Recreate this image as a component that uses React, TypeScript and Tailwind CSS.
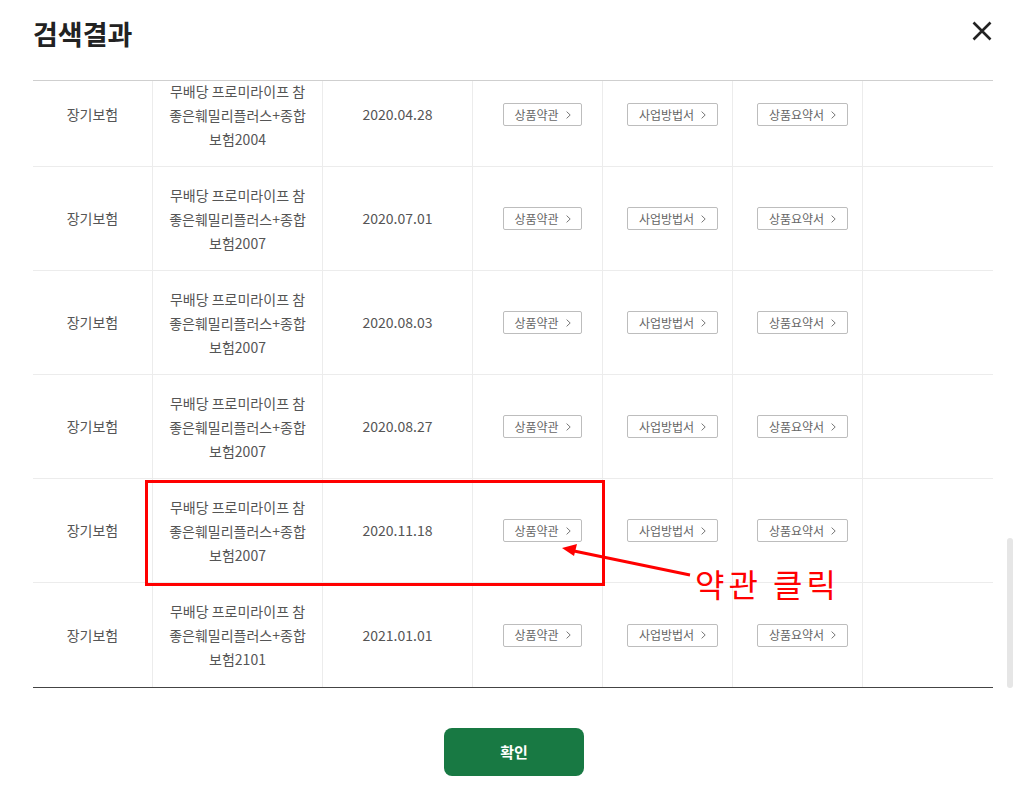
const rows = [
  { name: "보험2004", date: "2020.04.28" },
  { name: "보험2007", date: "2020.07.01" },
  { name: "보험2007", date: "2020.08.03" },
  { name: "보험2007", date: "2020.08.27" },
  { name: "보험2007", date: "2020.11.18" },
  { name: "보험2101", date: "2021.01.01" },
];

function DocButton({ label, w }: { label: string; w: string }) {
  return (
    <button
      className={`flex h-[23px] ${w} items-center justify-center gap-[7px] rounded-[2px] border border-[#bdbdbd] bg-white text-[12px] text-[#666]`}
    >
      <span>{label}</span>
      <svg width="5" height="8" viewBox="0 0 5 8" fill="none">
        <path d="M0.6 0.6 L4.2 4 L0.6 7.4" stroke="#777" strokeWidth="1" />
      </svg>
    </button>
  );
}

function Row({ name, date, last }: { name: string; date: string; last: boolean }) {
  return (
    <div
      className={`grid h-[104px] shrink-0 grid-cols-[120px_170px_150px_130px_130px_130px_130px] ${
        last ? "" : "border-b border-[#ececec]"
      }`}
    >
      <div className="flex items-center justify-center border-r border-[#ececec]">장기보험</div>
      <div className="flex flex-col items-center justify-center border-r border-[#ececec] leading-[24px]">
        <span>무배당 프로미라이프 참</span>
        <span>좋은훼밀리플러스+종합</span>
        <span>{name}</span>
      </div>
      <div className="flex items-center justify-center border-r border-[#ececec]">{date}</div>
      <div className="flex items-center justify-center border-r border-[#ececec] pl-[10px]">
        <DocButton label="상품약관" w="w-[79px]" />
      </div>
      <div className="flex items-center justify-center border-r border-[#ececec] pl-[10px]">
        <DocButton label="사업방법서" w="w-[91px]" />
      </div>
      <div className="flex items-center justify-center border-r border-[#ececec] pl-[10px]">
        <DocButton label="상품요약서" w="w-[91px]" />
      </div>
      <div />
    </div>
  );
}

export default function App() {
  return (
    <div
      className="relative h-[801px] w-[1028px] overflow-hidden bg-white text-[14px] text-[#555]"
      style={{ fontFamily: '"Noto Sans CJK KR", "Noto Sans", sans-serif' }}
    >
      <header className="flex h-[80px] items-start justify-between pl-[33px] pr-[36px]">
        <h1 className="mt-[14px] text-[27px] font-bold text-[#222]">검색결과</h1>
        <button className="mt-[21px]" aria-label="닫기">
          <svg width="20" height="20" viewBox="0 0 20 20">
            <path d="M1.5 1.5 L18.5 18.5 M18.5 1.5 L1.5 18.5" stroke="#222" strokeWidth="2.6" />
          </svg>
        </button>
      </header>

      <div className="mx-[33px] flex h-[608px] w-[960px] flex-col justify-end overflow-hidden border-t border-b border-t-[#cfcfcf] border-b-[#444]">
        {rows.map((r, i) => (
          <Row key={i} name={r.name} date={r.date} last={i === rows.length - 1} />
        ))}
      </div>

      <div className="absolute left-[1007px] top-[538px] h-[150px] w-[6px] rounded-full bg-[#e6e6e6]" />

      <div className="mt-[40px] flex justify-center">
        <button className="h-[48px] w-[140px] rounded-[8px] bg-[#187943] text-[15px] font-bold text-white">
          확인
        </button>
      </div>

      {/* annotation */}
      <div className="absolute left-[145px] top-[480px] h-[106px] w-[460px] border-[3px] border-[#ff0000]" />
      <svg className="absolute left-0 top-0" width="1028" height="801">
        <line x1="690" y1="575" x2="574" y2="551" stroke="#ff0000" strokeWidth="3" />
        <polygon points="562,548 577,544 574,556" fill="#ff0000" />
      </svg>
      <div className="absolute left-[695px] top-[563px] text-[32px] leading-[40px] tracking-[4px] text-[#ff0000]">
        약관 클릭
      </div>
    </div>
  );
}
